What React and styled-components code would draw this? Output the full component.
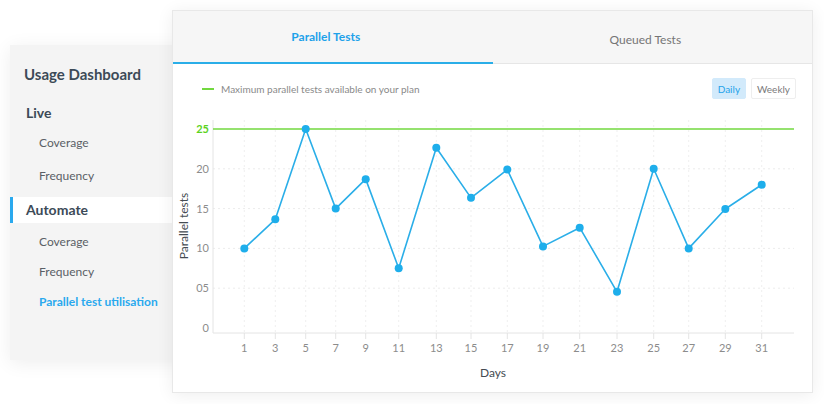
import React, { useState } from 'react';
import styled, { createGlobalStyle } from 'styled-components';

const GlobalStyle = createGlobalStyle`
  body {
    margin: 0;
    background: #ffffff;
    font-family: Lato, 'Noto Sans', sans-serif;
  }
`;

const DAYS = [1, 3, 5, 7, 9, 11, 13, 15, 17, 19, 21, 23, 25, 27, 29, 31];
const XPOS = [244.3, 275.3, 305.7, 335.7, 365.7, 398.7, 436.3, 471, 507.3, 543, 579.7, 617, 653.7, 688.7, 725.3, 761.7];
const VALUES = [10, 13.65, 25, 15, 18.7, 7.5, 22.65, 16.35, 19.9, 10.25, 12.6, 4.55, 20, 10, 14.95, 18];
const Y_TICKS = [
  { v: 0, label: '0' },
  { v: 5, label: '05' },
  { v: 10, label: '10' },
  { v: 15, label: '15' },
  { v: 20, label: '20' },
];

const PLOT = { left: 213, right: 794, top: 120, axis: 333 };
const yOf = v => 328 - v * 7.96;

function Sidebar() {
  return (
    <SideCard>
      <SideTitle>Usage Dashboard</SideTitle>
      <SectionHead>Live</SectionHead>
      <SideItem $h={33}>Coverage</SideItem>
      <SideItem $h={33}>Frequency</SideItem>
      <SectionHead $active>Automate</SectionHead>
      <SideItem $h={30}>Coverage</SideItem>
      <SideItem $h={30}>Frequency</SideItem>
      <SideItem $h={30} $active>
        Parallel test utilisation
      </SideItem>
    </SideCard>
  );
}

function Chart() {
  const points = XPOS.map((x, i) => `${x},${yOf(VALUES[i])}`).join(' ');

  return (
    <ChartSvg width="639" height="287" viewBox="0 0 639 287">
      <g transform="translate(-173,-105)">
        {Y_TICKS.filter(t => t.v > 0).map(t => (
          <line
            key={t.v}
            x1={PLOT.left}
            x2={PLOT.right}
            y1={yOf(t.v)}
            y2={yOf(t.v)}
            stroke="#ececec"
            strokeDasharray="2 3"
          />
        ))}
        {XPOS.map(x => (
          <line
            key={x}
            x1={x}
            x2={x}
            y1={PLOT.top}
            y2={PLOT.axis}
            stroke="#efefef"
            strokeDasharray="2 3"
          />
        ))}

        <line x1={PLOT.left} x2={PLOT.left} y1={PLOT.top} y2={PLOT.axis} stroke="#e4e4e4" />
        <line x1={PLOT.left} x2={PLOT.right} y1={PLOT.axis} y2={PLOT.axis} stroke="#e4e4e4" />
        {XPOS.map(x => (
          <line key={`t${x}`} x1={x} x2={x} y1={PLOT.axis} y2={PLOT.axis + 6} stroke="#e4e4e4" />
        ))}

        <line x1={PLOT.left} x2={PLOT.right} y1={yOf(25)} y2={yOf(25)} stroke="#72d83f" strokeWidth="1.5" />

        {Y_TICKS.map(t => (
          <AxisText key={t.label} x="209" y={yOf(t.v) + 4} textAnchor="end">
            {t.label}
          </AxisText>
        ))}
        <LimitText x="209" y={yOf(25) + 4} textAnchor="end">
          25
        </LimitText>

        {DAYS.map((d, i) => (
          <AxisText key={d} x={XPOS[i]} y="352" textAnchor="middle">
            {d}
          </AxisText>
        ))}

        <AxisTitle x="493" y="377" textAnchor="middle">
          Days
        </AxisTitle>
        <AxisTitle x="0" y="0" textAnchor="middle" transform="translate(188,226) rotate(-90)">
          Parallel tests
        </AxisTitle>

        <polyline points={points} fill="none" stroke="#2aaee8" strokeWidth="1.6" strokeLinejoin="round" />
        {XPOS.map((x, i) => (
          <circle key={`p${x}`} cx={x} cy={yOf(VALUES[i])} r="4" fill="#1eaeeb" />
        ))}
      </g>
    </ChartSvg>
  );
}

export default function App() {
  const [tab, setTab] = useState('parallel');
  const [range, setRange] = useState('daily');

  return (
    <>
      <GlobalStyle />
      <Stage>
        <Sidebar />
        <MainCard>
          <TabBar>
            <Tab $active={tab === 'parallel'} onClick={() => setTab('parallel')}>
              Parallel Tests
            </Tab>
            <Tab $active={tab === 'queued'} onClick={() => setTab('queued')}>
              Queued Tests
            </Tab>
          </TabBar>
          <Toolbar>
            <Legend>
              <LegendLine />
              Maximum parallel tests available on your plan
            </Legend>
            <RangeGroup>
              <RangeButton $active={range === 'daily'} onClick={() => setRange('daily')}>
                Daily
              </RangeButton>
              <RangeButton $active={range === 'weekly'} onClick={() => setRange('weekly')}>
                Weekly
              </RangeButton>
            </RangeGroup>
          </Toolbar>
          <Chart />
        </MainCard>
      </Stage>
    </>
  );
}

const Stage = styled.div`
  display: flex;
  align-items: flex-start;
  padding: 10px 0 0 10px;
  width: 824px;
  height: 404px;
  box-sizing: border-box;
`;

const SideCard = styled.aside`
  flex: none;
  width: 190px;
  height: 315px;
  margin-top: 35px;
  padding-top: 19px;
  box-sizing: border-box;
  background: #f4f4f4;
  box-shadow: 0 3px 18px rgba(0, 0, 0, 0.07);
`;

const SideTitle = styled.div`
  padding-left: 14px;
  height: 20px;
  line-height: 20px;
  font-size: 15px;
  font-weight: 700;
  color: #3c4a57;
`;

const SectionHead = styled.div`
  margin: ${p => (p.$active ? '5px 0 4px' : '16px 0 0')};
  height: 26px;
  line-height: 26px;
  padding-left: 13px;
  border-left: 3px solid ${p => (p.$active ? '#2aa9ee' : 'transparent')};
  background: ${p => (p.$active ? '#ffffff' : 'transparent')};
  font-size: 14px;
  font-weight: 700;
  color: #3c4a57;
`;

const SideItem = styled.div`
  height: ${p => p.$h}px;
  line-height: ${p => p.$h}px;
  padding-left: 29px;
  font-size: 12px;
  font-weight: ${p => (p.$active ? 700 : 400)};
  color: ${p => (p.$active ? '#2aa9ee' : '#5a5f66')};
`;

const MainCard = styled.section`
  position: relative;
  z-index: 1;
  flex: none;
  width: 641px;
  height: 383px;
  margin-left: -28px;
  box-sizing: border-box;
  border: 1px solid #e8e8e8;
  background: #ffffff;
  box-shadow: 0 2px 16px rgba(0, 0, 0, 0.07);
  display: flex;
  flex-direction: column;
`;

const TabBar = styled.div`
  display: flex;
  height: 52px;
  background: #f6f6f6;
  border-bottom: 1px solid #e6e6e6;
`;

const Tab = styled.div`
  flex: 1;
  display: flex;
  align-items: center;
  justify-content: center;
  padding: ${p => (p.$active ? '0 14px 0 0' : '6px 14px 0 0')};
  font-size: 12px;
  font-weight: ${p => (p.$active ? 700 : 400)};
  color: ${p => (p.$active ? '#1ea2ea' : '#757575')};
  border-bottom: 2px solid ${p => (p.$active ? '#2aaee8' : 'transparent')};
  margin-bottom: -1px;
  cursor: pointer;
`;

const Toolbar = styled.div`
  display: flex;
  align-items: center;
  justify-content: space-between;
  height: 21px;
  padding: 14px 16px 6px 29px;
`;

const Legend = styled.div`
  display: flex;
  align-items: center;
  gap: 7px;
  margin-top: 1px;
  font-size: 10px;
  color: #8a8a8a;
`;

const LegendLine = styled.span`
  width: 12px;
  height: 1.5px;
  background: #72d83f;
`;

const RangeGroup = styled.div`
  display: flex;
  gap: 5px;
`;

const RangeButton = styled.button`
  height: 21px;
  padding: 0 5px;
  border: 1px solid ${p => (p.$active ? '#d2eafb' : '#eeeeee')};
  border-radius: 2px;
  background: ${p => (p.$active ? '#d2eafb' : '#ffffff')};
  color: ${p => (p.$active ? '#1ea2ea' : '#7a7a7a')};
  font-family: Lato, 'Noto Sans', sans-serif;
  font-size: 10px;
  cursor: pointer;
`;

const ChartSvg = styled.svg`
  display: block;
  flex: none;
`;

const AxisText = styled.text`
  font-family: Lato, 'Noto Sans', sans-serif;
  font-size: 11px;
  fill: #8c8c8c;
`;

const LimitText = styled.text`
  font-family: Lato, 'Noto Sans', sans-serif;
  font-size: 11px;
  font-weight: 700;
  fill: #5cd31d;
`;

const AxisTitle = styled.text`
  font-family: Lato, 'Noto Sans', sans-serif;
  font-size: 12px;
  fill: #444b52;
`;
